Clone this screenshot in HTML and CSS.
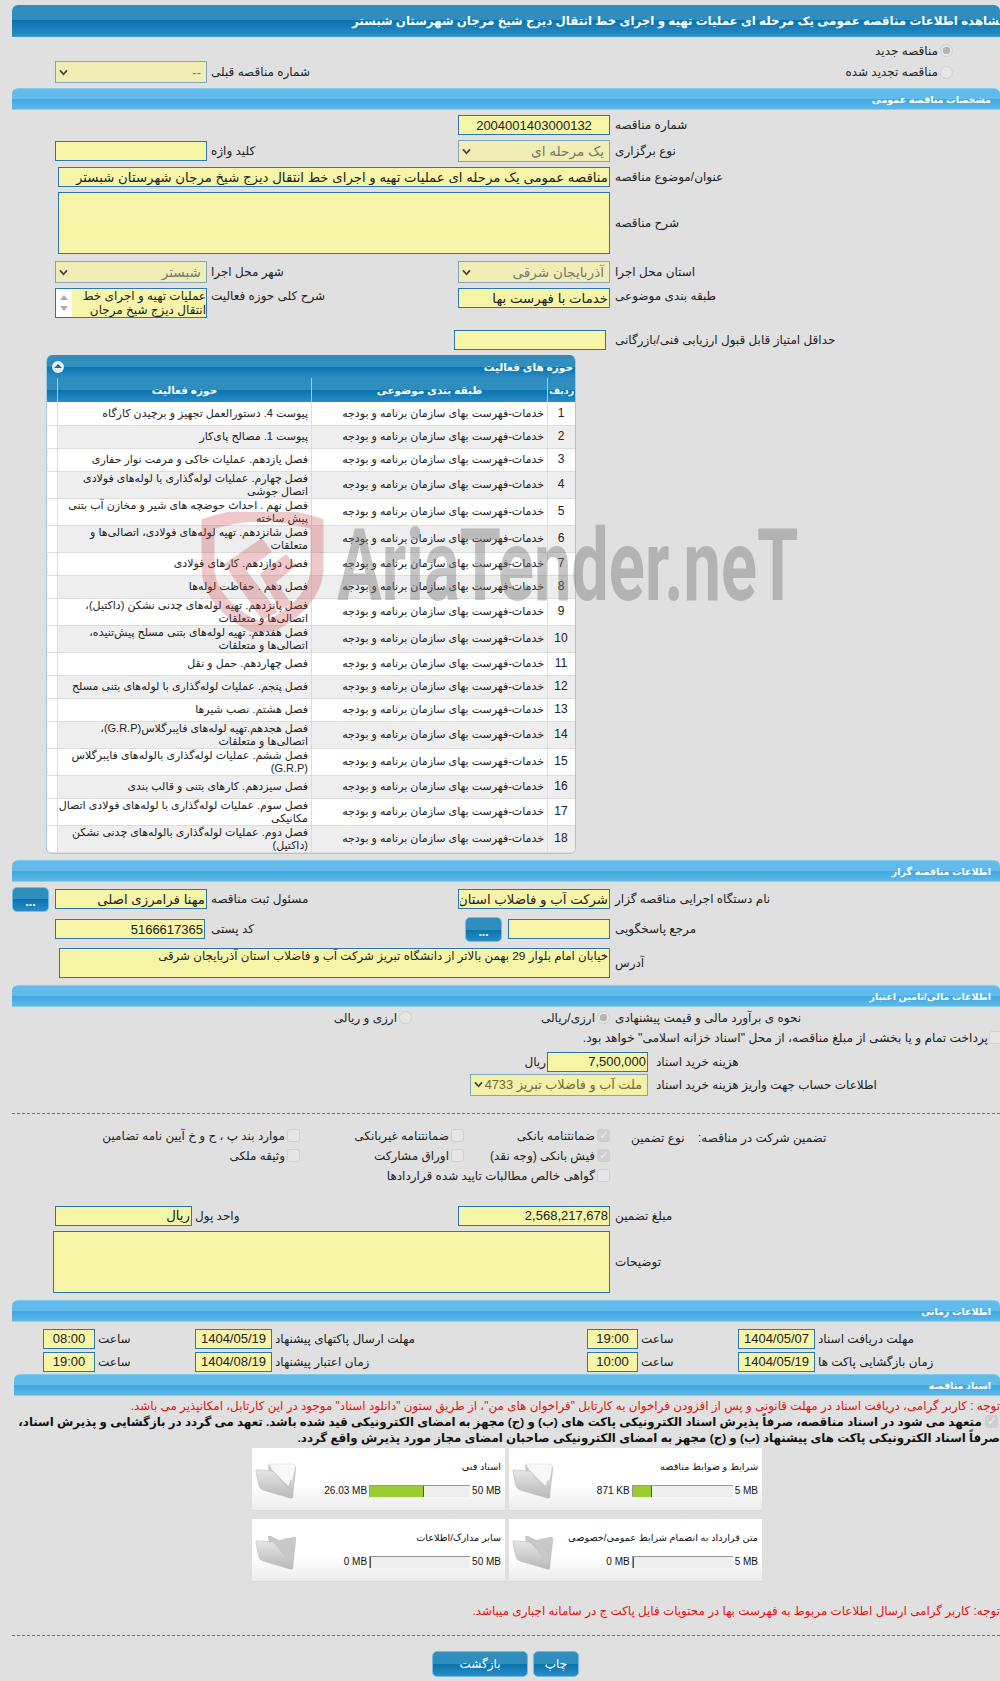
FILE: index.html
```html
<!DOCTYPE html>
<html lang="fa">
<head>
    <meta charset="UTF-8">
    <title>مشاهده اطلاعات مناقصه</title>
    <link rel="stylesheet" href="styles.css">
</head>
<body>
<div class="page">

    <div class="title-bar"><span dir="rtl">مشاهده اطلاعات مناقصه عمومی یک مرحله ای عملیات تهیه و اجرای خط انتقال دیزج شیخ مرجان شهرستان شبستر</span></div>

    <!-- watermark lies over the table -->
    <svg class="mark-shield" viewBox="0 0 125 120">
        <path d="M8 12 Q62 -6 117 12 L117 60 Q112 96 62 118 Q13 96 8 60 Z" fill="none" stroke="#c83c3c" stroke-width="13"/>
        <path d="M24 52 L62 26 L72 40 L46 58 L78 100 L62 108 Z M60 62 L86 42 L96 54 L76 70 L92 92 L80 98 Z" fill="#c83c3c"/>
    </svg>
    <div class="mark-text">AriaTender.neT</div>

    <div class="radio-row first"><label class="check"><input type="radio" class="radio" checked disabled><span>مناقصه جدید</span></label></div>
    <div class="row prev-row">
        <div class="c1 select off"><svg viewBox="0 0 10 8"><path d="M1 1.5 L5 6 L9 1.5" fill="none" stroke="#444" stroke-width="2"/></svg><span>--</span></div>
        <div class="c2 lbl">شماره مناقصه قبلی</div>
        <div class="radio-slot"><label class="check"><input type="radio" class="radio" disabled><span>مناقصه تجدید شده</span></label></div>
    </div>

    <div class="bar">مشخصات مناقصه عمومی</div>

    <div class="row mt5">
        <input class="c3 field digits center" dir="rtl" value="2004001403000132" readonly>
        <div class="c4 lbl">شماره مناقصه</div>
    </div>
    <div class="row mt5">
        <input class="c1 field" dir="rtl" readonly>
        <div class="c2 lbl">کلید واژه</div>
        <div class="c3 select off"><svg viewBox="0 0 10 8"><path d="M1 1.5 L5 6 L9 1.5" fill="none" stroke="#444" stroke-width="2"/></svg><span>یک مرحله ای</span></div>
        <div class="c4 lbl">نوع برگزاری</div>
    </div>
    <div class="row mt5">
        <input class="wide field" dir="rtl" value="مناقصه عمومی یک مرحله ای عملیات تهیه و اجرای خط انتقال دیزج شیخ مرجان شهرستان شبستر" readonly>
        <div class="c4 lbl">عنوان/موضوع مناقصه</div>
    </div>
    <div class="row mt5">
        <textarea class="wide area desc" dir="rtl" readonly></textarea>
        <div class="c4 lbl">شرح مناقصه</div>
    </div>
    <div class="row mt7">
        <div class="c1 select off"><svg viewBox="0 0 10 8"><path d="M1 1.5 L5 6 L9 1.5" fill="none" stroke="#444" stroke-width="2"/></svg><span>شبستر</span></div>
        <div class="c2 lbl">شهر محل اجرا</div>
        <div class="c3 select off"><svg viewBox="0 0 10 8"><path d="M1 1.5 L5 6 L9 1.5" fill="none" stroke="#444" stroke-width="2"/></svg><span>آذربایجان شرقی</span></div>
        <div class="c4 lbl">استان محل اجرا</div>
    </div>
    <div class="row mt5 top">
        <div class="c1 listbox">
            <div class="list-scroll"></div>
            <div class="list-text" dir="rtl">عملیات تهیه و اجرای خط<br>انتقال دیزج شیخ مرجان</div>
        </div>
        <div class="c2 lbl">شرح کلی حوزه فعالیت</div>
        <input class="c3 field" dir="rtl" value="خدمات با فهرست بها" readonly>
        <div class="c4 lbl">طبقه بندی موضوعی</div>
    </div>
    <div class="row score-row">
        <input class="c3 field score" dir="rtl" readonly>
        <div class="c4 lbl">حداقل امتیاز قابل قبول ارزیابی فنی/بازرگانی</div>
    </div>

    <div class="activity">
        <div class="activity-head">
            <span class="toggle"></span>
            <span>حوزه های فعالیت</span>
        </div>
        <table class="activity-table" dir="rtl">
            <thead>
                <tr><th class="col-num">ردیف</th><th class="col-cat">طبقه بندی موضوعی</th><th class="col-act">حوزه فعالیت</th><th></th></tr>
            </thead>
            <tbody>
                <tr><td class="num">1</td><td>خدمات-فهرست بهای سازمان برنامه و بودجه</td><td>پیوست 4. دستورالعمل تجهیز و برچیدن کارگاه</td><td></td></tr>
                <tr><td class="num">2</td><td>خدمات-فهرست بهای سازمان برنامه و بودجه</td><td>پیوست 1. مصالح پای‌کار</td><td></td></tr>
                <tr><td class="num">3</td><td>خدمات-فهرست بهای سازمان برنامه و بودجه</td><td>فصل یازدهم. عملیات خاکی و مرمت نوار حفاری</td><td></td></tr>
                <tr><td class="num">4</td><td>خدمات-فهرست بهای سازمان برنامه و بودجه</td><td>فصل چهارم. عملیات لوله‌گذاری با لوله‌های فولادی<br>اتصال جوشی</td><td></td></tr>
                <tr><td class="num">5</td><td>خدمات-فهرست بهای سازمان برنامه و بودجه</td><td>فصل نهم . احداث حوضچه های شیر و مخازن آب بتنی<br>پیش ساخته</td><td></td></tr>
                <tr><td class="num">6</td><td>خدمات-فهرست بهای سازمان برنامه و بودجه</td><td>فصل شانزدهم. تهیه لوله‌های فولادی، اتصالی‌ها و<br>متعلقات</td><td></td></tr>
                <tr><td class="num">7</td><td>خدمات-فهرست بهای سازمان برنامه و بودجه</td><td>فصل دوازدهم. کارهای فولادی</td><td></td></tr>
                <tr><td class="num">8</td><td>خدمات-فهرست بهای سازمان برنامه و بودجه</td><td>فصل دهم . حفاظت لوله‌ها</td><td></td></tr>
                <tr><td class="num">9</td><td>خدمات-فهرست بهای سازمان برنامه و بودجه</td><td>فصل پانزدهم. تهیه لوله‌های چدنی نشکن (داکتیل)،<br>اتصالی‌ها و متعلقات</td><td></td></tr>
                <tr><td class="num">10</td><td>خدمات-فهرست بهای سازمان برنامه و بودجه</td><td>فصل هفدهم. تهیه لوله‌های بتنی مسلح پیش‌تنیده،<br>اتصالی‌ها و متعلقات</td><td></td></tr>
                <tr><td class="num">11</td><td>خدمات-فهرست بهای سازمان برنامه و بودجه</td><td>فصل چهاردهم. حمل و نقل</td><td></td></tr>
                <tr><td class="num">12</td><td>خدمات-فهرست بهای سازمان برنامه و بودجه</td><td>فصل پنجم. عملیات لوله‌گذاری با لوله‌های بتنی مسلح</td><td></td></tr>
                <tr><td class="num">13</td><td>خدمات-فهرست بهای سازمان برنامه و بودجه</td><td>فصل هشتم. نصب شیرها</td><td></td></tr>
                <tr><td class="num">14</td><td>خدمات-فهرست بهای سازمان برنامه و بودجه</td><td>فصل هجدهم.تهیه لوله‌های فایبرگلاس(G.R.P)،<br>اتصالی‌ها و متعلقات</td><td></td></tr>
                <tr><td class="num">15</td><td>خدمات-فهرست بهای سازمان برنامه و بودجه</td><td>فصل ششم. عملیات لوله‌گذاری بالوله‌های فایبرگلاس<br>(G.R.P)</td><td></td></tr>
                <tr><td class="num">16</td><td>خدمات-فهرست بهای سازمان برنامه و بودجه</td><td>فصل سیزدهم. کارهای بتنی و قالب بندی</td><td></td></tr>
                <tr><td class="num">17</td><td>خدمات-فهرست بهای سازمان برنامه و بودجه</td><td>فصل سوم. عملیات لوله‌گذاری با لوله‌های فولادی اتصال<br>مکانیکی</td><td></td></tr>
                <tr><td class="num">18</td><td>خدمات-فهرست بهای سازمان برنامه و بودجه</td><td>فصل دوم. عملیات لوله‌گذاری بالوله‌های چدنی نشکن<br>(داکتیل)</td><td></td></tr>
            </tbody>
        </table>
    </div>

    <div class="bar mt6">اطلاعات مناقصه گزار</div>

    <div class="row mt5">
        <button class="dots">...</button>
        <input class="c1 field" dir="rtl" value="مهنا فرامرزی اصلی" readonly>
        <div class="c2 lbl">مسئول ثبت مناقصه</div>
        <input class="c3 field" dir="rtl" value="شرکت آب و فاضلاب استان" readonly>
        <div class="c4 lbl">نام دستگاه اجرایی مناقصه گزار</div>
    </div>
    <div class="row mt5">
        <input class="c1 field digits postal" dir="rtl" value="5166617365" readonly>
        <div class="c2 lbl postal-lbl">کد پستی</div>
        <div class="c3 ref">
            <button class="dots">...</button>
            <input class="field" dir="rtl" readonly>
        </div>
        <div class="c4 lbl">مرجع پاسخگویی</div>
    </div>
    <div class="row mt6">
        <textarea class="wide area address" dir="rtl" readonly>خیابان امام بلوار 29 بهمن بالاتر از دانشگاه تبریز شرکت آب و فاضلاب استان آذربایجان شرقی</textarea>
        <div class="c4 lbl">آدرس</div>
    </div>

    <div class="bar mt7">اطلاعات مالی/تامین اعتبار</div>

    <div class="row mt4">
        <div class="c2 opt-second"><label class="check"><input type="radio" class="radio" disabled><span>ارزی و ریالی</span></label></div>
        <div class="c3"><label class="check"><input type="radio" class="radio" checked disabled><span>ارزی/ریالی</span></label></div>
        <div class="c4 lbl">نحوه ی برآورد مالی و قیمت پیشنهادی</div>
    </div>
    <div class="treasury"><label class="check"><input type="checkbox" class="box" disabled><span>پرداخت تمام و یا بخشی از مبلغ مناقصه، از محل "اسناد خزانه اسلامی" خواهد بود.</span></label></div>

    <div class="money-row mt5">
        <div class="money-ctl"><span dir="rtl">ریال</span><input class="field digits money" dir="rtl" value="7,500,000" readonly></div>
        <div class="lbl">هزینه خرید اسناد</div>
    </div>
    <div class="money-row mt2">
        <div class="select bank"><svg viewBox="0 0 10 8"><path d="M1 1.5 L5 6 L9 1.5" fill="none" stroke="#444" stroke-width="2"/></svg><span dir="rtl">ملت آب و فاضلاب تبریز 4733</span></div>
        <div class="lbl">اطلاعات حساب جهت واریز هزینه خرید اسناد</div>
    </div>

    <hr class="dash first-dash">

    <div class="guarantee">
        <label class="check"><input type="checkbox" class="box" disabled><span>موارد بند پ ، ح و خ آیین نامه تضامین</span></label>
        <label class="check"><input type="checkbox" class="box" disabled><span>ضمانتنامه غیربانکی</span></label>
        <label class="check"><input type="checkbox" class="box" checked disabled><span>ضمانتنامه بانکی</span></label>
        <div class="lbl g-type">نوع تضمین</div>
        <div class="lbl g-title">تضمین شرکت در مناقصه:</div>

        <label class="check"><input type="checkbox" class="box" disabled><span>وثیقه ملکی</span></label>
        <label class="check"><input type="checkbox" class="box" disabled><span>اوراق مشارکت</span></label>
        <label class="check"><input type="checkbox" class="box" checked disabled><span>فیش بانکی (وجه نقد)</span></label>

        <label class="check g-last"><input type="checkbox" class="box" disabled><span>گواهی خالص مطالبات تایید شده قراردادها</span></label>
    </div>

    <div class="row amount-row">
        <div class="unit"><input class="field" dir="rtl" value="ریال" readonly><div class="lbl">واحد پول</div></div>
        <input class="c3 field digits" dir="rtl" value="2,568,217,678" readonly>
        <div class="c4 lbl">مبلغ تضمین</div>
    </div>
    <div class="row mt5">
        <textarea class="area notes" dir="rtl" readonly></textarea>
        <div class="c4 lbl">توضیحات</div>
    </div>

    <div class="bar mt7">اطلاعات زمانی</div>

    <div class="dates mt7">
        <input class="field digits center" value="08:00" readonly>
        <div class="lbl">ساعت</div>
        <input class="field digits center" value="1404/05/19" readonly>
        <div class="lbl">مهلت ارسال پاکتهای پیشنهاد</div>
        <input class="field digits center" value="19:00" readonly>
        <div class="lbl">ساعت</div>
        <input class="field digits center" value="1404/05/07" readonly>
        <div class="lbl">مهلت دریافت اسناد</div>
    </div>
    <div class="dates mt3">
        <input class="field digits center" value="19:00" readonly>
        <div class="lbl">ساعت</div>
        <input class="field digits center" value="1404/08/19" readonly>
        <div class="lbl">زمان اعتبار پیشنهاد</div>
        <input class="field digits center" value="10:00" readonly>
        <div class="lbl">ساعت</div>
        <input class="field digits center" value="1404/05/19" readonly>
        <div class="lbl">زمان بازگشایی پاکت ها</div>
    </div>

    <div class="bar docs-bar">اسناد مناقصه</div>

    <div class="red-note" dir="rtl">توجه : کاربر گرامی، دریافت اسناد در مهلت قانونی و پس از افزودن فراخوان به کارتابل "فراخوان های من"، از طریق ستون "دانلود اسناد" موجود در این کارتابل، امکانپذیر می باشد.</div>
    <div class="pledge" dir="rtl"><input type="checkbox" class="box" checked disabled> متعهد می شود در اسناد مناقصه، صرفاً پذیرش اسناد الکترونیکی پاکت های (ب) و (ج) مجهز به امضای الکترونیکی قید شده باشد. تعهد می گردد در بازگشایی و پذیرش اسناد، صرفاً اسناد الکترونیکی پاکت های پیشنهاد (ب) و (ج) مجهز به امضای الکترونیکی صاحبان امضای مجاز مورد پذیرش واقع گردد.</div>

    <div class="cards">
        <div class="card">
            <svg class="folder" viewBox="0 0 42 38"><use href="#folder-back"/><use href="#folder-paper"/><use href="#folder-front"/></svg>
            <div class="card-info">
                <div class="card-title" dir="rtl">اسناد فنی</div>
                <div class="meter-row"><span>26.03 MB</span><div class="meter"><div class="meter-fill" style="width:54%"></div></div><span>50 MB</span></div>
            </div>
        </div>
        <div class="card">
            <svg class="folder" viewBox="0 0 42 38"><use href="#folder-back"/><use href="#folder-paper"/><use href="#folder-front"/></svg>
            <div class="card-info">
                <div class="card-title" dir="rtl">شرایط و ضوابط مناقصه</div>
                <div class="meter-row"><span>871 KB</span><div class="meter"><div class="meter-fill" style="width:19%"></div></div><span>5 MB</span></div>
            </div>
        </div>
        <div class="card">
            <svg class="folder" viewBox="0 0 42 38"><use href="#folder-back"/><use href="#folder-front"/></svg>
            <div class="card-info">
                <div class="card-title" dir="rtl">سایر مدارک/اطلاعات</div>
                <div class="meter-row"><span>0 MB</span><div class="meter"><div class="meter-fill" style="width:1%"></div></div><span>50 MB</span></div>
            </div>
        </div>
        <div class="card">
            <svg class="folder" viewBox="0 0 42 38"><use href="#folder-back"/><use href="#folder-front"/></svg>
            <div class="card-info">
                <div class="card-title" dir="rtl">متن قرارداد به انضمام شرایط عمومی/خصوصی</div>
                <div class="meter-row"><span>0 MB</span><div class="meter"><div class="meter-fill" style="width:1%"></div></div><span>5 MB</span></div>
            </div>
        </div>
    </div>

    <div class="red-foot" dir="rtl">توجه: کاربر گرامی ارسال اطلاعات مربوط به فهرست بها در محتویات فایل پاکت ج در سامانه اجباری میباشد.</div>

    <hr class="dash last-dash">

    <div class="actions">
        <button class="action back">بازگشت</button>
        <button class="action print">چاپ</button>
    </div>
</div>

<!-- shared folder drawing -->
<svg class="defs" width="0" height="0">
    <defs>
        <linearGradient id="folder-grad" x1="0" y1="0" x2="0" y2="1">
            <stop offset="0" stop-color="#e6e6e6"/>
            <stop offset="1" stop-color="#b8b8b8"/>
        </linearGradient>
        <path id="folder-back" d="M13 4 Q13 2 16 3 L24 7 L38 4 Q42 3 41 8 L38 34 Q37 37 35 35 L14 12 Z" fill="#c8c8c8"/>
        <path id="folder-paper" d="M14 2 L37 2 Q41 2 40 6 L36 26 L18 10 Z" fill="#f8f8f8" stroke="#dcdcdc" stroke-width=".6"/>
        <path id="folder-front" d="M1 10 Q0 7 4 8 L17 9 Q19 9 21 12 L33 26 L36 18 L38 34 Q38 37 35 36 L8 28 Q5 27 4 24 Z" fill="url(#folder-grad)" stroke="#bcbcbc" stroke-width=".6"/>
    </defs>
</svg>
</body>
</html>
```

FILE: styles.css
```css
html, body {
    margin: 0;
    height: 1681px;
    overflow: hidden;
}

body {
    background-color: #e0e0e0;
    color: #222;
    font-family: "Liberation Sans", "DejaVu Sans", sans-serif;
    font-size: 12px;
}

.page {
    position: relative;
    width: 988px;
    margin-left: 12px;
    padding-top: 5px;
}

.defs {
    position: absolute;
}

/* header bars */
.title-bar {
    height: 32px;
    box-sizing: border-box;
    padding-left: 340px;
    display: flex;
    align-items: center;
    overflow: hidden;
    white-space: nowrap;
    color: white;
    font-weight: bold;
    font-size: 11.8px;
    border-radius: 6px 6px 0 0;
    border-bottom: 1px solid #3a9ed8;
    background: linear-gradient(#2f8ebd 0, #2f8ebd 50%, #0874ad 50%, #2b8cc6 100%);
}

.bar {
    height: 22px;
    box-sizing: border-box;
    padding: 0 9px 0 0;
    line-height: 21px;
    text-align: right;
    direction: rtl;
    color: white;
    font-weight: bold;
    font-size: 9.5px;
    border-radius: 6px 6px 0 0;
    border-top: 1px solid #7fcdf0;
    border-bottom: 1px solid #8ccfec;
    background: linear-gradient(#62bbea 0, #62bbea 48%, #3ba7e1 48%, #5fb8e6 100%);
    margin-top: 5px;
}

.mt2 { margin-top: 2px; }
.mt3 { margin-top: 3px; }
.mt4 { margin-top: 4px; }
.mt5 { margin-top: 5px; }
.mt6 { margin-top: 6px; }
.mt7 { margin-top: 7px; }

/* form rows */
.row {
    display: grid;
    grid-template-columns: 43px 152px 251px 152px 1fr;
    align-items: center;
}

.row.top {
    align-items: start;
}

.top .lbl {
    line-height: 17px;
}

.c1 { grid-column: 2; }
.c2 { grid-column: 3; }
.c3 { grid-column: 4; }
.c4 { grid-column: 5; }

.wide {
    grid-column: 2 / 5;
    margin-left: 3px;
}

.lbl {
    direction: rtl;
    text-align: left;
    white-space: nowrap;
    padding-left: 5px;
}

.c2.lbl {
    padding-left: 4px;
}

.field {
    height: 20px;
    min-width: 0;
    box-sizing: border-box;
    padding: 0 1px;
    background-color: #f6f4a6;
    border: 1px solid #2a78ae;
    color: #222;
    font-family: inherit;
    font-size: 13.3px;
    outline: none;
}

.digits {
    font-size: 13px;
}

.center {
    text-align: center;
}

.area {
    display: block;
    box-sizing: border-box;
    padding: 0 1px;
    background-color: #f6f4a6;
    border: 1px solid #2a78ae;
    color: #222;
    font-family: inherit;
    font-size: 11.8px;
    resize: none;
    outline: none;
    overflow: hidden;
}

.desc { height: 62px; }

.address {
    height: 30px;
    margin-left: 4px;
}

.select {
    height: 22px;
    box-sizing: border-box;
    padding: 0 5px 0 3px;
    display: flex;
    align-items: center;
    justify-content: space-between;
    background-color: #f0eeb4;
    border: 1px solid #7fa6bf;
    color: #777;
    font-size: 13.6px;
}

.select svg {
    width: 9px;
    height: 7px;
    flex: none;
}

.select span {
    white-space: nowrap;
}

.listbox {
    height: 30px;
    box-sizing: border-box;
    display: flex;
    background-color: #f6f4a6;
    border: 1px solid #2a78ae;
}

.list-scroll {
    width: 16px;
    background-color: white;
    position: relative;
}

.list-scroll::before,
.list-scroll::after {
    content: "";
    position: absolute;
    left: 4px;
    border-left: 4px solid transparent;
    border-right: 4px solid transparent;
}

.list-scroll::before {
    top: 6px;
    border-bottom: 5px solid #aaa;
}

.list-scroll::after {
    bottom: 6px;
    border-top: 5px solid #aaa;
}

.list-text {
    flex: 1;
    font-size: 12px;
    line-height: 14px;
    white-space: nowrap;
    overflow: hidden;
}

.score-row {
    margin-top: 12px;
}

.score {
    margin-left: -4px;
    margin-right: 4px;
}

/* radios and checkboxes */
.check {
    display: flex;
    align-items: center;
    direction: rtl;
    gap: 2px;
    white-space: nowrap;
}

.radio, .box {
    appearance: none;
    flex: none;
    width: 13px;
    height: 13px;
    margin: 0;
    background-color: #e6e6e6;
    border: 1px solid #cfcfcf;
    box-sizing: border-box;
}

.radio {
    border-radius: 50%;
}

.radio:checked {
    background: radial-gradient(circle, #b4b4b4 0, #b4b4b4 45%, #e6e6e6 50%);
}

.box {
    border-radius: 3px;
    position: relative;
}

.box:checked {
    background-color: #cfcfcf;
}

.box:checked::after {
    content: "\2713";
    position: absolute;
    top: -2px;
    left: 1px;
    color: #eee;
    font: bold 12px "DejaVu Sans", sans-serif;
}

.radio-row {
    display: flex;
    justify-content: flex-end;
    padding-right: 47px;
}

.radio-row.first {
    height: 21px;
    margin-top: 3px;
    box-sizing: border-box;
}

.prev-row {
    height: 22px;
}

.radio-slot {
    grid-column: 4 / 6;
    padding-right: 47px;
}

/* activity table */
.activity {
    margin: 5px 0 0 34px;
    width: 530px;
    box-sizing: border-box;
    border: 1px solid #9ccbe8;
    border-top: 0;
    border-radius: 6px;
    overflow: hidden;
}

.activity-head {
    height: 23px;
    box-sizing: border-box;
    padding: 0 2px 0 5px;
    display: flex;
    align-items: center;
    justify-content: space-between;
    color: white;
    font-weight: bold;
    font-size: 10.5px;
    background: linear-gradient(#2f8ebd 0, #2f8ebd 50%, #0874ad 50%, #2b8cc6 100%);
}

.toggle {
    width: 12px;
    height: 12px;
    border-radius: 50%;
    background-color: #e8eef2;
    position: relative;
}

.toggle::after {
    content: "";
    position: absolute;
    top: 3px;
    left: 2px;
    border-left: 4px solid transparent;
    border-right: 4px solid transparent;
    border-bottom: 4px solid #1a6f9f;
}

.activity-table {
    width: 100%;
    table-layout: fixed;
    border-collapse: collapse;
}

.activity-table th {
    height: 24px;
    padding: 0;
    color: white;
    font-size: 10.5px;
    border-left: 1px solid #8fd0f0;
    background: linear-gradient(#2f8ebd 0, #2f8ebd 50%, #0874ad 50%, #2b8cc6 100%);
}

.activity-table th:last-child {
    border-left: 0;
}

.activity-table th.col-num {
    font-size: 9.5px;
}

.col-num { width: 27px; }
.col-cat { width: 235px; }
.col-act { width: 253px; }

.activity-table td {
    height: 23px;
    box-sizing: border-box;
    padding: 0 3px 0 2px;
    line-height: 13px;
    font-size: 11px;
    white-space: nowrap;
    background-color: white;
    border-left: 1px solid #ddd;
    border-bottom: 1px solid #ddd;
}

.activity-table tr:nth-child(even) td {
    background-color: #eee;
}

.activity-table tr td:last-child {
    background-color: white;
    border-left: 0;
}

.activity-table .num {
    text-align: center;
    font-size: 12px;
}

/* watermark */
.mark-shield {
    position: absolute;
    left: 188px;
    top: 512px;
    width: 125px;
    height: 120px;
    opacity: .27;
    pointer-events: none;
}

.mark-text {
    position: absolute;
    left: 325px;
    top: 510px;
    font: bold 100px/112px Roboto, sans-serif;
    color: #777;
    opacity: .42;
    white-space: nowrap;
    transform-origin: left top;
    transform: scaleX(.667);
    pointer-events: none;
}

/* organiser section */
.dots {
    grid-column: 1;
    width: 37px;
    height: 25px;
    padding: 6px 0 0;
    color: white;
    font-weight: bold;
    font-size: 12px;
    line-height: 12px;
    border: 1px solid #6cc0e8;
    border-radius: 5px;
    background: linear-gradient(#2f8ebd 0, #2f8ebd 50%, #0874ad 50%, #2b8cc6 100%);
}

.postal {
    width: 150px;
}

.postal-lbl {
    padding-left: 8px;
}

.ref {
    display: flex;
    justify-content: flex-end;
    align-items: center;
    gap: 6px;
}

.ref .field {
    width: 102px;
}

/* finance section */
.opt-second {
    padding-right: 46px;
}

.treasury {
    margin: 4px -2px 0 0;
    height: 18px;
    display: flex;
    align-items: center;
    font-size: 12.2px;
}

.treasury .check {
    width: 100%;
    gap: 1px;
}

.money-row {
    display: grid;
    grid-template-columns: 178px 1fr;
    margin-left: 458px;
    align-items: center;
}

.money-row .lbl {
    padding-left: 8px;
}

.money-ctl {
    display: flex;
    justify-content: flex-end;
    align-items: center;
    gap: 1px;
}

.money {
    width: 101px;
}

.bank {
    background-color: #f3f1a9;
    color: #6f6b3c;
    font-size: 12.8px;
}

.dash {
    border: 0;
    border-top: 1px dashed #2a86b8;
    margin: 0;
}

.first-dash {
    margin-top: 17px;
}

.guarantee {
    display: grid;
    grid-template-columns: 288px 164px 146px 88px 1fr;
    grid-auto-rows: 20px;
    margin-top: 15px;
}

.guarantee .check {
    align-self: start;
}

.g-type {
    padding-left: 21px;
    line-height: 18px;
}

.g-title {
    padding-left: 0;
    line-height: 18px;
}

.g-last {
    grid-column: 3;
    grid-row: 3;
    justify-self: end;
}

.amount-row {
    margin-top: 17px;
}

.unit {
    grid-column: 2 / 4;
    display: flex;
    align-items: center;
}

.unit .field {
    width: 137px;
}

.unit .lbl {
    padding-left: 3px;
}

.notes {
    grid-column: 1 / 5;
    margin-left: 41px;
    height: 62px;
}

/* dates */
.dates {
    display: grid;
    grid-template-columns: 52px 100px 77px 315px 51px 100px 77px 1fr;
    margin-left: 31px;
    align-items: center;
}

.dates .lbl {
    padding-left: 3px;
}

.dates .field {
    padding: 0;
}

.docs-bar {
    margin: 2px 0 0 2px;
}

/* notes above the document cards */
.red-note {
    margin-top: 2px;
    height: 16px;
    line-height: 16px;
    color: #e01010;
    font-size: 11.9px;
    white-space: nowrap;
}

.pledge {
    font-weight: bold;
    font-size: 11.8px;
    line-height: 16px;
    color: #111;
}

.pledge .box {
    vertical-align: -2px;
    margin-right: 2px;
}

.cards {
    display: grid;
    grid-template-columns: 253px 253px;
    grid-auto-rows: 63px;
    gap: 8px 4px;
    margin: 2px 0 0 240px;
}

.card {
    display: flex;
    box-sizing: border-box;
    padding: 0 4px 0 3px;
    border-bottom: 1px solid #d8d8d8;
    background: linear-gradient(#fff 0, #fff 60%, #ececec 100%);
}

.folder {
    flex: none;
    width: 42px;
    height: 38px;
    margin-top: 14px;
}

.card-info {
    flex: 1;
    min-width: 0;
}

.card-title {
    margin-top: 12px;
    height: 14px;
    line-height: 14px;
    white-space: nowrap;
    font-size: 9.7px;
    color: #111;
}

.meter-row {
    margin-top: 11px;
    display: flex;
    justify-content: flex-end;
    align-items: center;
    gap: 2px;
    font-size: 10px;
    color: #111;
}

.meter {
    width: 101px;
    height: 12px;
    background-color: #eee;
    box-sizing: border-box;
    border-top: 1px solid #999;
    border-left: 1px solid #999;
}

.meter-fill {
    height: 100%;
    background-color: #9acd32;
    border-right: 1px solid #555;
    box-sizing: border-box;
}

.red-foot {
    margin-top: 21px;
    height: 16px;
    line-height: 16px;
    color: #e01010;
    font-size: 11.9px;
    white-space: nowrap;
}

.last-dash {
    margin-top: 16px;
}

.actions {
    display: flex;
    gap: 5px;
    margin: 15px 0 0 420px;
}

.action {
    height: 26px;
    padding: 0;
    color: white;
    font-family: inherit;
    font-size: 12px;
    border: 1px solid #6cc0e8;
    border-radius: 5px;
    background: linear-gradient(#2f8ebd 0, #2f8ebd 50%, #0874ad 50%, #2b8cc6 100%);
}

.back { width: 96px; }
.print { width: 46px; }
```
